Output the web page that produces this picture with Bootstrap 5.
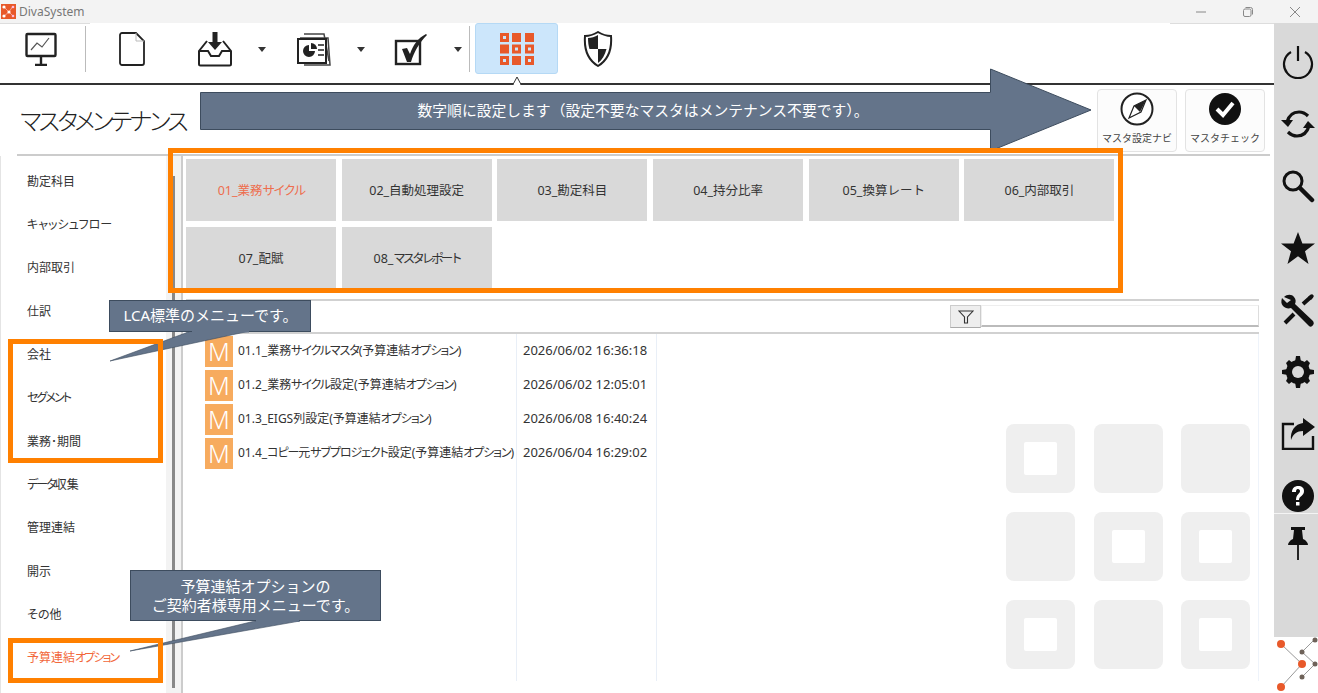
<!DOCTYPE html>
<html lang="ja">
<head>
<meta charset="utf-8">
<title>DivaSystem</title>
<link href="https://cdn.jsdelivr.net/npm/bootstrap@5.3.0/dist/css/bootstrap.min.css" rel="stylesheet">
<style>
html,body{margin:0;height:693px;overflow:hidden;background:#fff}
body{font-family:"Noto Sans","Noto Sans CJK JP",sans-serif;font-size:12px;color:#333;font-feature-settings:"palt";position:relative}
.appwin{width:1318px;height:693px}
.ttlbar{height:24px;background:#f3f3f3;color:#777;font-size:12px}
.ttlbar .brand-ic{margin:0 3px 0 1px}
.winctl{width:47px}
.rail{width:44px;flex:none}
.rail-top{height:614px;background:#d9d9d9;padding-top:19px}
.rail-ic{width:44px;height:40px;padding-left:4px}
.rail-sep{border-top:1px solid #f4f4f4;height:0;margin-top:-3px}
.rail-pin{margin-top:9px}
.rail-stack{gap:22px}
.tbar{height:62px;border-bottom:2px solid #333;position:relative;background:linear-gradient(#ddd,#ddd) 0 0/90px 1px no-repeat,linear-gradient(#ddd,#ddd) 100% 0/104px 1px no-repeat}
.tbi{height:60px;padding-bottom:8px}
.w8{width:8px}.w10{width:10px}.w20{width:20px}.w74{width:74px}.w80{width:80px}.w82{width:82px}.w84{width:84px}.w88{width:88px}.w92{width:92px}
.tsep{width:1px;height:46px;background:#bbb;margin:3px 3px 0 7px}
.tsep.first{margin-left:3px;margin-right:0}
.tact{width:83px;height:51px;background:#cce6fb;border:1px solid #b5d9f5;border-radius:3px;margin-left:2px}
.notch{position:absolute;left:510px;top:52px}
.ttlrow{height:71px;margin:0 4px 0 17px;border-bottom:2px solid #ccc;padding:4px 5px 0 0}
.pagehd{font-size:24px;color:#222;margin:0 0 0 3px;padding-top:14px;line-height:36px;font-weight:300;letter-spacing:-3px;white-space:nowrap}
.sidebtn{width:80px;height:63px;background:#fcfcfc;border:1px solid #e3e3e3;border-radius:4px;font-size:10px;color:#444;padding:2px 0 0}
.sidebtn svg{flex:none}
.sidebtn span{margin-top:5px;line-height:14px;white-space:nowrap}
.bodyrow{height:537px}
.snav{width:166px;flex:none;padding-top:4px;border-left:1px solid #e4e4e4}
.snav .list-group-item{height:43.35px;border:0;padding:0 0 0 26px;background:transparent;color:#333;display:flex;align-items:center;font-size:12px;white-space:pre}
.snav .list-group-item.on{color:#f2683c}
.sgut{width:17px;flex:none;background:#f3f3f3;border-right:2px solid #ccc;padding-left:6px}
.sthumb{width:3px;height:512px;margin-top:20px;background:#888}
.cpane{flex:1;min-width:0;padding:3px 15px 0 3px}
.tiles{gap:6px 5.7px;width:960px;height:130px}
.tile{width:150px;height:62px;background:#d9d9d9;color:#333;font-size:12.5px;border:0;padding:2px 0 0}
.tile.on{color:#ee6d4d}
.kn{letter-spacing:-1.1px}
.kn2{letter-spacing:-1.9px}
.kn3{letter-spacing:-3px}
.hrl{height:2px;background:#ccc;opacity:.9;margin:0}
.hrl.a{margin-top:10px}
.filt{height:23px;margin:4px 0;padding-left:764px}
.fbtn{width:31px;height:23px;background:#eee;border:1px solid #ccc;border-bottom-color:#aaa;padding:0}
.finp{flex:1;height:22px;border:1px solid #eee;border-bottom:2px solid #bbb;border-right-color:#ddd;background:#fff}
.lst{height:347px;border-right:1px solid #eef3fa}
.c1{width:331px;border-right:1px solid #e9eff7;padding:0 0 0 19px;flex:none}
.c2{width:140px;border-right:1px solid #e9eff7;padding:0 0 0 6px;flex:none;font-size:13px}
.c2 .lrow{font-size:13px}
.c3{flex:1;padding:0 8px 12px 0}
.lrow{height:34px;white-space:nowrap;font-size:12px;color:#333}
.micon{width:28px;height:31px;background:#f7ab5e;color:#fff;font-size:25px;line-height:31px;text-align:center;font-weight:300;margin-right:5px;flex:none}
.wmk{display:grid;grid-template-columns:repeat(3,69px);grid-auto-rows:69px;gap:19px 18.5px}
.wcell{background:#efefef;border-radius:8px}
.wcell i{display:block;width:33px;height:33px;background:#fff;border-radius:2px}
/* annotations over the page */
.ovsvg{position:absolute;left:0;top:0;pointer-events:none}
.cap{position:absolute;color:#fff;font-size:15px;text-align:center;line-height:19px;display:flex;align-items:center;justify-content:center;font-feature-settings:normal}
.cap1{left:200px;top:92px;width:886px;height:37px;font-size:14.8px}
.cap2{left:110px;top:300px;width:201px;height:31px}
.cap3{left:130px;top:570px;width:251px;height:51px}
.obox{position:absolute;border:5px solid #ff8000}
.ob1{left:168px;top:148px;width:955px;height:145px}
.ob2{left:8px;top:339px;width:155px;height:124px}
.ob3{left:8px;top:638px;width:155px;height:45px}
</style>
</head>
<body>
<div class="appwin d-flex flex-column">
  <header class="ttlbar d-flex align-items-center">
    <svg class="brand-ic" width="15" height="15" viewBox="0 0 15 15"><rect width="15" height="15" fill="#e8592a"/><path d="M3 3 8 8 3 12M12 2 8 8 12 12" stroke="#fbb" stroke-width=".7" fill="none"/><circle cx="3" cy="3" r="1.600" fill="#fff"/><circle cx="8" cy="8" r="1.600" fill="#fff"/><circle cx="3" cy="12" r="1.600" fill="#fff"/><circle cx="12" cy="3" r="1.300" fill="#fbd"/><circle cx="12" cy="12" r="1.300" fill="#fbd"/></svg>
    <span>DivaSystem</span>
    <div class="ms-auto d-flex">
      <div class="winctl d-flex justify-content-center"><svg width="12" height="12" viewBox="0 0 12 12"><path d="M1 6h10" stroke="#888"/></svg></div>
      <div class="winctl d-flex justify-content-center"><svg width="12" height="12" viewBox="0 0 12 12"><rect x="1.500" y="3" width="7.500" height="7.500" rx="1.500" fill="none" stroke="#888"/><path d="M3.500 1.500h5a2 2 0 0 1 2 2v5" fill="none" stroke="#888"/></svg></div>
      <div class="winctl d-flex justify-content-center"><svg width="12" height="12" viewBox="0 0 12 12"><path d="M1 1l10 10M11 1 1 11" stroke="#888"/></svg></div>
    </div>
  </header>
  <div class="d-flex flex-grow-1">
    <main class="flex-grow-1 d-flex flex-column" style="min-width:0">
      <nav class="tbar d-flex align-items-start">
        <div class="tbi w82 d-flex align-items-center justify-content-center">
          <svg width="34" height="34" viewBox="0 0 34 34"><rect x="2.500" y="2" width="29" height="22" fill="#fff" stroke="#222" stroke-width="2.400" rx="1"/><path d="M7 18l6-7 5 4 7-9" fill="none" stroke="#555" stroke-width="1.200"/><path d="M17 24v8M11 33h12" stroke="#222" stroke-width="2.400"/></svg>
        </div>
        <div class="tsep first"></div>
        <div class="tbi w92 d-flex align-items-center justify-content-center">
          <svg width="30" height="36" viewBox="0 0 30 36"><path d="M3 4a2 2 0 0 1 2-2h14l8 8v22a2 2 0 0 1-2 2H5a2 2 0 0 1-2-2z" fill="#fff" stroke="#222" stroke-width="1.800"/><path d="M19 2v8h8" fill="none" stroke="#bbb" stroke-width="1"/></svg>
        </div>
        <div class="tbi w74 d-flex align-items-center justify-content-center">
          <svg width="36" height="36" viewBox="0 0 36 36"><path d="M10 10 2 20v13a1.500 1.500 0 0 0 1.500 1.500h29A1.500 1.500 0 0 0 34 33V20l-8-10" fill="none" stroke="#222" stroke-width="2"/><path d="M2 20h9l3 5h8l3-5h9" fill="none" stroke="#222" stroke-width="2"/><path d="M15.500 1h5v10h4.500l-7 8-7-8h4.500z" fill="#222"/></svg>
        </div>
        <div class="tbi w20 d-flex align-items-center justify-content-center"><svg width="8" height="5" viewBox="0 0 8 5"><path d="M0 0h8L4 5z" fill="#333"/></svg></div>
        <div class="tbi w84 d-flex align-items-center justify-content-center">
          <svg width="36" height="36" viewBox="0 0 36 36"><path d="M8 3h20l5 27" fill="none" stroke="#444" stroke-width="1.500"/><path d="M4 7h28l2 27H8" fill="none" stroke="#444" stroke-width="1.500"/><rect x="2" y="8" width="28" height="24" fill="#fff" stroke="#222" stroke-width="2"/><path d="M13 14a6 6 0 1 0 6 6h-6z" fill="#222"/><path d="M15 12a6 6 0 0 1 6 6h-6z" fill="#222"/><path d="M22 14h6M22 19h6M22 24h6" stroke="#222" stroke-width="1.500"/></svg>
        </div>
        <div class="tbi w10 d-flex align-items-center justify-content-center"><svg width="8" height="5" viewBox="0 0 8 5"><path d="M0 0h8L4 5z" fill="#333"/></svg></div>
        <div class="tbi w88 d-flex align-items-center justify-content-center">
          <svg width="36" height="34" viewBox="0 0 36 34"><rect x="4" y="9" width="24" height="23" fill="#fff" stroke="#222" stroke-width="2.400"/><path d="M10 17l5-1 3 6C21 13 26 6 34 2l1 1C27 11 22 20 19 30h-4z" fill="#222"/></svg>
        </div>
        <div class="tbi w8 d-flex align-items-center justify-content-center"><svg width="8" height="5" viewBox="0 0 8 5"><path d="M0 0h8L4 5z" fill="#333"/></svg></div>
        <div class="tsep"></div>
        <button class="tact btn p-0 d-flex align-items-center justify-content-center" type="button" aria-label="master">
          <svg width="34" height="32" viewBox="0 0 34 32" fill="#e8592a"><path fill-rule="evenodd" d="M0 0h9v9H0zM3 3v3h3V3z"/><path d="M12 0h9v9h-9zM25 0h9v9h-9zM0 11.500h9v9H0z"/><path fill-rule="evenodd" d="M12 11.500h9v9h-9zm3 3v3h3v-3zM25 11.500h9v9h-9zm3 3v3h3v-3zM0 23h9v9H0zm3 3v3h3v-3z"/><path d="M12 23h9v9h-9z"/><path fill-rule="evenodd" d="M25 23h9v9h-9zm3 3v3h3v-3z"/></svg>
        </button>
        <div class="tbi w80 d-flex align-items-center justify-content-center">
          <svg width="30" height="36" viewBox="0 0 30 36"><path d="M15 1c5 3 9 4 13 4 1 13-3 24-13 30C5 29 1 18 2 5c4 0 8-1 13-4z" fill="#fff" stroke="#222" stroke-width="2"/><path d="M15 4c-3 2-7 3-10 3 0 4 .5 8 1.500 11H15zM15 18v14c4-3 7-8 8.500-14z" fill="#222"/></svg>
        </div>
        <svg class="notch" width="14" height="10" viewBox="0 0 14 10"><path d="M0 9.500h3L7 2l4 7.500h3" fill="#fff" stroke="#333" stroke-width="1"/><rect x="4" y="8" width="6" height="2" fill="#fff"/></svg>
      </nav>
      <div class="ttlrow d-flex justify-content-between">
        <h1 class="pagehd">マスタメンテナンス</h1>
        <div class="d-flex gap-2">
          <button class="sidebtn btn d-flex flex-column align-items-center" type="button">
            <svg width="34" height="34" viewBox="0 0 34 34"><circle cx="17" cy="17" r="15.500" fill="#fff" stroke="#222" stroke-width="2"/><path d="M26 8 14 14l-5 12 12-6z" fill="#fff" stroke="#222" stroke-width="1.200"/><path d="M26 8 14 14l6 6z" fill="#222"/></svg>
            <span>マスタ設定ナビ</span>
          </button>
          <button class="sidebtn btn d-flex flex-column align-items-center" type="button">
            <svg width="34" height="34" viewBox="0 0 34 34"><circle cx="17" cy="17" r="16" fill="#111"/><path d="M9 17l6 6L25 11" fill="none" stroke="#fff" stroke-width="4"/></svg>
            <span>マスタチェック</span>
          </button>
        </div>
      </div>
      <div class="bodyrow d-flex">
        <div class="snav list-group list-group-flush">
          <a class="list-group-item">勘定科目</a>
          <a class="list-group-item">キャッシュフロー</a>
          <a class="list-group-item">内部取引</a>
          <a class="list-group-item">仕訳</a>
          <a class="list-group-item">会社</a>
          <a class="list-group-item"><span class="kn2">セグメント</span></a>
          <a class="list-group-item">業務･期間</a>
          <a class="list-group-item"><span class="kn2">データ</span>収集</a>
          <a class="list-group-item">管理連結</a>
          <a class="list-group-item">開示</a>
          <a class="list-group-item">その他</a>
          <a class="list-group-item on">予算連結<span class="kn2">オプション</span></a>
        </div>
        <div class="sgut"><div class="sthumb"></div></div>
        <div class="cpane">
          <div class="tiles d-flex flex-wrap align-content-start">
            <button class="tile btn rounded-0 on" type="button">01_業務<span class="kn2">サイクル</span></button>
            <button class="tile btn rounded-0" type="button">02_自動処理設定</button>
            <button class="tile btn rounded-0" type="button">03_勘定科目</button>
            <button class="tile btn rounded-0" type="button">04_持分比率</button>
            <button class="tile btn rounded-0" type="button">05_換算レート</button>
            <button class="tile btn rounded-0" type="button">06_内部取引</button>
            <button class="tile btn rounded-0" type="button">07_配賦</button>
            <button class="tile btn rounded-0" type="button">08_<span class="kn3">マスタレポート</span></button>
          </div>
          <div class="hrl a"></div>
          <div class="filt d-flex">
            <button class="fbtn btn rounded-0 d-flex align-items-center justify-content-center" type="button" aria-label="filter">
              <svg width="16" height="14" viewBox="0 0 16 14"><path d="M1 1h14L9.500 7v6h-3V7z" fill="none" stroke="#333" stroke-width="1.100"/></svg>
            </button>
            <div class="finp"></div>
          </div>
          <div class="hrl"></div>
          <div class="lst d-flex">
            <div class="c1">
              <div class="lrow d-flex align-items-center"><span class="micon">M</span><span>01.1_業務<span class="kn">サイクルマスタ</span>(予算連結<span class="kn">オプション</span>)</span></div>
              <div class="lrow d-flex align-items-center"><span class="micon">M</span><span>01.2_業務<span class="kn">サイクル</span>設定(予算連結<span class="kn">オプション</span>)</span></div>
              <div class="lrow d-flex align-items-center"><span class="micon">M</span><span>01.3_EIGS列設定(予算連結<span class="kn">オプション</span>)</span></div>
              <div class="lrow d-flex align-items-center"><span class="micon">M</span><span>01.4_<span class="kn">コピー</span>元<span class="kn">サブプロジェクト</span>設定(予算連結<span class="kn">オプション</span>)</span></div>
            </div>
            <div class="c2">
              <div class="lrow d-flex align-items-center">2026/06/02 16:36:18</div>
              <div class="lrow d-flex align-items-center">2026/06/02 12:05:01</div>
              <div class="lrow d-flex align-items-center">2026/06/08 16:40:24</div>
              <div class="lrow d-flex align-items-center">2026/06/04 16:29:02</div>
            </div>
            <div class="c3 d-flex justify-content-end align-items-end">
              <div class="wmk">
                <div class="wcell d-flex align-items-center justify-content-center"><i></i></div><div class="wcell"></div><div class="wcell"></div>
                <div class="wcell"></div><div class="wcell d-flex align-items-center justify-content-center"><i></i></div><div class="wcell d-flex align-items-center justify-content-center"><i></i></div>
                <div class="wcell d-flex align-items-center justify-content-center"><i></i></div><div class="wcell"></div><div class="wcell d-flex align-items-center justify-content-center"><i></i></div>
              </div>
            </div>
          </div>
        </div>
      </div>
    </main>
    <aside class="rail d-flex flex-column">
      <div class="rail-top d-flex flex-column">
        <div class="rail-stack d-flex flex-column">
          <div class="rail-ic d-flex align-items-center justify-content-center"><svg width="32" height="34" viewBox="0 0 32 34"><path d="M9 7a14 14 0 1 0 14 0" fill="none" stroke="#111" stroke-width="2.200"/><path d="M16 1v15" stroke="#111" stroke-width="2.200"/></svg></div>
          <div class="rail-ic d-flex align-items-center justify-content-center"><svg width="34" height="32" viewBox="0 0 34 32"><path d="M6 14C8 7 13 4 18 4c4 0 7 2 9 4" fill="none" stroke="#111" stroke-width="3.200"/><path d="M0 12h12l-5 7z" fill="#111"/><path d="M28 18c-2 7-7 10-12 10-4 0-7-2-9-4" fill="none" stroke="#111" stroke-width="3.200"/><path d="M34 20H22l5-7z" fill="#111"/></svg></div>
          <div class="rail-ic d-flex align-items-center justify-content-center"><svg width="34" height="34" viewBox="0 0 34 34"><circle cx="12" cy="12" r="9" fill="none" stroke="#111" stroke-width="3"/><path d="M19 19l12 12" stroke="#111" stroke-width="4.500" stroke-linecap="round"/></svg></div>
          <div class="rail-ic d-flex align-items-center justify-content-center"><svg width="34" height="32" viewBox="0 0 34 32"><path d="M17 0l4.400 11.500H34l-10 7.700L27.500 32 17 24.200 6.500 32 10 19.200 0 11.500h12.600z" fill="#111"/></svg></div>
          <div class="rail-ic d-flex align-items-center justify-content-center"><svg width="34" height="34" viewBox="0 0 34 34"><path d="M3 4c3-3 8-3 10 0 2 2 2 5 1 7l18 17c1 2 1 3 0 4-1 2-3 2-4 1L10 15c-3 1-6 0-8-2C0 11 0 8 1 5l5 5 4-3z" fill="#111"/><path d="M31 3l-9 8M13 21l-9 9" stroke="#111" stroke-width="4"/><path d="M31 1l2 2-3 4-3-3z" fill="#111"/></svg></div>
          <div class="rail-ic d-flex align-items-center justify-content-center"><svg width="32" height="32" viewBox="0 0 32 32"><g fill="#111"><circle cx="16" cy="16" r="12"/><path d="M14 0h4l1 6h-6zM14 32h4l1-6h-6zM0 14v4l6 1v-6zM32 14v4l-6 1v-6zM4 7l3-3 5 4-5 5zM28 7l-3-3-5 4 5 5zM4 25l3 3 5-4-5-5zM28 25l-3 3-5-4 5-5z"/></g><circle cx="16" cy="16" r="6" fill="#d9d9d9"/></svg></div>
          <div class="rail-ic d-flex align-items-center justify-content-center"><svg width="34" height="32" viewBox="0 0 34 32"><path d="M13 6H2v25h30V18" fill="none" stroke="#111" stroke-width="2.400"/><path d="M22 0l12 9-12 9v-5c-6 0-10 3-12 9C9 13 14 6 22 5z" fill="#111"/></svg></div>
          <div class="rail-ic d-flex align-items-center justify-content-center"><svg width="32" height="32" viewBox="0 0 32 32"><circle cx="16" cy="16" r="16" fill="#111"/><path d="M10 12c0-4 3-6 6-6 4 0 6 2 6 5 0 5-5 5-5 9h-3c0-6 4-6 4-9 0-1-1-2-2-2-2 0-2 2-2 3z" fill="#fff"/><rect x="14" y="22" width="3.500" height="3.500" fill="#fff"/></svg></div>
        </div>
        <div class="rail-sep"></div>
        <div class="rail-ic rail-pin d-flex align-items-center justify-content-center"><svg width="24" height="34" viewBox="0 0 24 34"><path d="M5 1h14v3h-3l1 9c3 1 5 4 5 6H2c0-2 2-5 5-6l1-9H5z" fill="#111"/><path d="M12 19v15" stroke="#111" stroke-width="1.800"/></svg></div>
      </div>
      <div class="flex-grow-1 d-flex">
        <svg width="44" height="55" viewBox="1274 638 44 55"><path d="M1281 645l21 20-21 23M1315 640l-13 13 13 12-13 13" fill="none" stroke="#999" stroke-width="1"/><g fill="#6e6259"><circle cx="1315" cy="641" r="2.500"/><circle cx="1302" cy="653" r="2.500"/><circle cx="1315" cy="665" r="2.500"/><circle cx="1302" cy="678" r="2.500"/></g><g fill="#e8592a"><circle cx="1281" cy="645" r="4"/><circle cx="1302" cy="665" r="4"/><circle cx="1281" cy="688" r="4"/></g></svg>
      </div>
    </aside>
  </div>
</div>

<svg class="ovsvg" width="1318" height="693" viewBox="0 0 1318 693">
  <path d="M200.500 92.500H990.500V69L1091 110 990.500 151V129.500H200.500z" fill="#64748a" stroke="#3d4c5e" stroke-width="1"/>
  <path d="M110 361 191 331H250z" fill="#64748a" stroke="#3d4c5e" stroke-width=".6"/>
  <path d="M130 651 255 621H300z" fill="#64748a" stroke="#3d4c5e" stroke-width=".6"/>
  <rect x="109.500" y="300.500" width="201" height="31" fill="#64748a" stroke="#3d4c5e"/>
  <rect x="130.500" y="570.500" width="250" height="50" fill="#64748a" stroke="#3d4c5e"/>
  <path d="M192 331.500h57M256 621h43" stroke="#64748a" stroke-width="2"/>
</svg>
<div class="cap cap1">数字順に設定します（設定不要なマスタはメンテナンス不要です）。</div>
<div class="cap cap2">LCA標準のメニューです。</div>
<div class="cap cap3">予算連結オプションの<br>ご契約者様専用メニューです。</div>
<div class="obox ob1"></div>
<div class="obox ob2"></div>
<div class="obox ob3"></div>
<script src="https://cdn.jsdelivr.net/npm/bootstrap@5.3.0/dist/js/bootstrap.bundle.min.js"></script>
</body>
</html>
